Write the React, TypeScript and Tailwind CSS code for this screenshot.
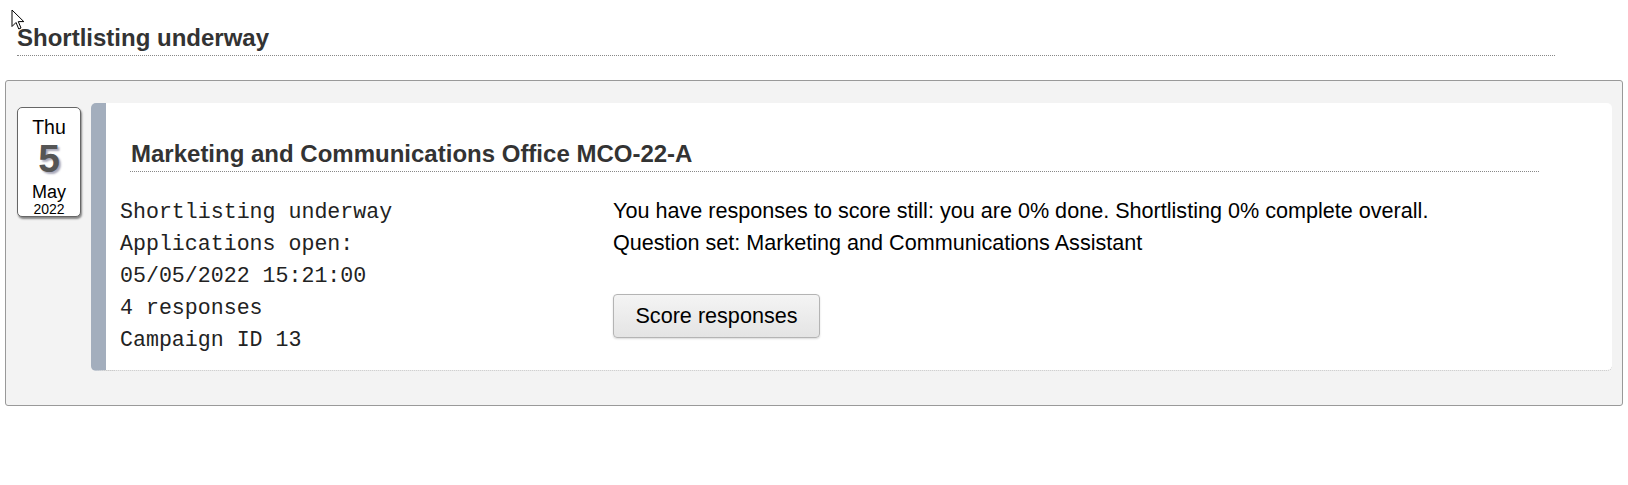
import React from 'react';

const campaign = {
    title: 'Marketing and Communications Office MCO-22-A',
    status: 'Shortlisting underway',
    opened: '05/05/2022 15:21:00',
    responses: 4,
    id: 13,
    questionSet: 'Marketing and Communications Assistant',
};

function Cursor() {
    return (
        <svg className="absolute left-[11px] top-[9px]" width="14" height="22" viewBox="0 0 14 22">
            <path d="M1 1 L1 17.5 L5 13.5 L7.8 20 L10 19 L7.3 12.6 L12.8 12.6 Z" fill="#fff" stroke="#000" strokeWidth="1" strokeLinejoin="round" />
        </svg>
    );
}

function DateBadge() {
    return (
        <div className="mt-[4px] flex h-[110px] w-[64px] shrink-0 flex-col items-center rounded-[5px] border border-[#666] bg-white shadow-[1px_2px_2px_rgba(0,0,0,0.45)]">
            <div className="mt-[8px] text-[19.5px] leading-[22px] text-black">Thu</div>
            <div className="mt-[2px] text-[39px] font-bold leading-[38px] text-[#555] [text-shadow:2px_2px_2px_#aab]">5</div>
            <div className="mt-[4px] text-[18px] leading-[20px] text-black">May</div>
            <div className="mt-[-1px] text-[14px] leading-[16px] text-black">2022</div>
        </div>
    );
}

export default function App() {
    return (
        <div className="relative min-h-[485px] w-full bg-white font-['Liberation_Sans',Arial,sans-serif] text-[21.6px] text-black">
            <Cursor />
            <h2 className="ml-[17px] w-[1538px] border-b border-dotted border-[#888] pt-[24px] pb-[3px] text-[24px] font-bold leading-[28px] text-[#333]">
                {campaign.status}
            </h2>

            <div className="mt-[24px] ml-[5px] flex w-[1618px] rounded-[3px] border border-[#999] bg-[#f3f3f3] pt-[22px] pr-[10px] pb-[34px] pl-[11px]">
                <DateBadge />

                <div className="ml-[10px] flex-1 rounded-[5px] border-b border-l-[15px] border-dotted border-b-[#bbb] border-l-[#a3aebd] bg-white" style={{ borderLeftStyle: 'solid' }}>
                    <h3 className="mt-[37px] ml-[24px] mr-[73px] border-b border-dotted border-[#888] pb-[3px] pl-[1px] text-[24px] font-bold leading-[28px] text-[#333]">
                        {campaign.title}
                    </h3>

                    <div className="mt-[23px] flex pb-[14px]">
                        <div className="w-[507px] shrink-0 pt-[1px] pl-[14px] font-['Liberation_Mono','Courier_New',monospace] text-[21.6px] leading-[32px] text-[#222]">
                            <div>{campaign.status}</div>
                            <div>Applications open:</div>
                            <div>{campaign.opened}</div>
                            <div>{campaign.responses} responses</div>
                            <div>Campaign ID {campaign.id}</div>
                        </div>

                        <div className="leading-[32px]">
                            <p>You have responses to score still: you are 0% done. Shortlisting 0% complete overall.</p>
                            <p>Question set: {campaign.questionSet}</p>
                            <button
                                type="button"
                                className="mt-[35px] h-[44px] w-[207px] rounded-[4px] border border-[#b4b4b4] bg-gradient-to-b from-[#f4f4f4] to-[#e4e4e4] text-[21.6px] leading-[26px] text-black shadow-[0_1px_2px_rgba(0,0,0,0.15)]"
                            >
                                Score responses
                            </button>
                        </div>
                    </div>
                </div>
            </div>
        </div>
    );
}
